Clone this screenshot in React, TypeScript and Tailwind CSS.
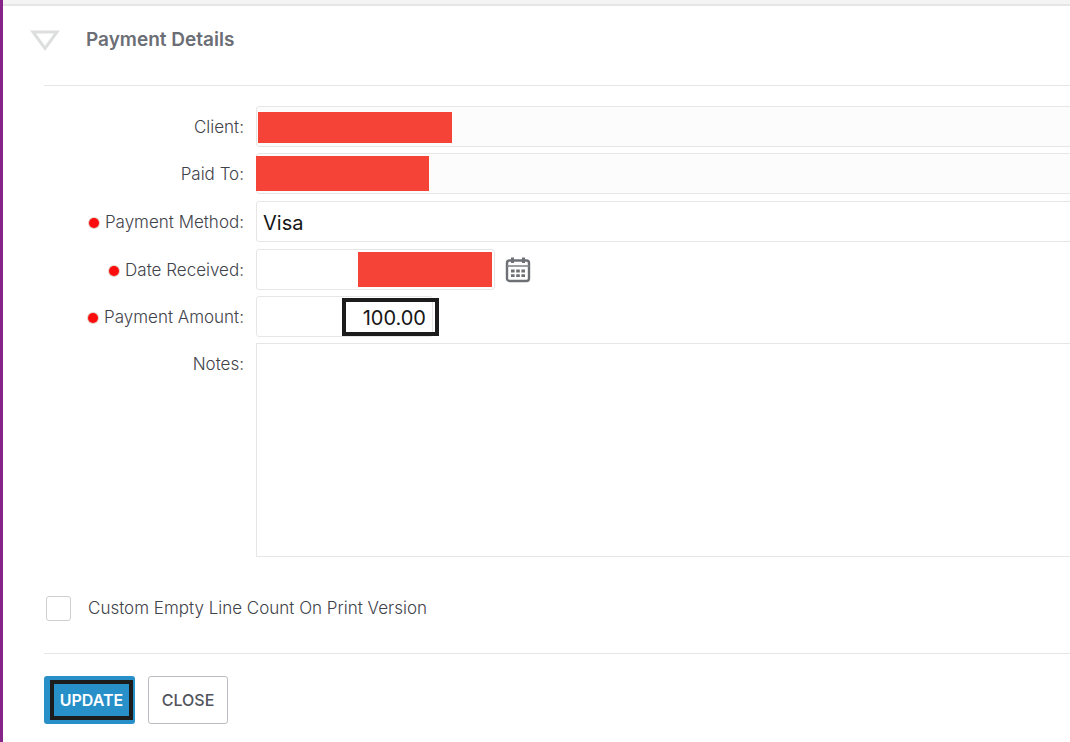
import type { ReactNode } from "react";

const fieldClass =
  "block h-[41px] rounded-[3px] border border-[#e6e6e6] px-1.5 pt-0.5 text-xl text-[#161616] outline-none";

type RowProps = {
  id: string;
  label: string;
  required?: boolean;
  children: ReactNode;
};

function Row({ id, label, required, children }: RowProps) {
  return (
    <div className="flex items-start">
      <label
        htmlFor={id}
        className="flex h-[41px] w-[200px] shrink-0 items-center justify-end gap-1.5 whitespace-nowrap pt-0.5 text-[17px] font-light text-[#3f434b]"
      >
        {required && (
          <span className="size-2.5 rounded-full bg-[#fb0d0d] ring-1 ring-[#e3cfc4]" />
        )}
        {label}
      </label>
      <div className="ml-3 flex min-w-0 grow items-center">{children}</div>
    </div>
  );
}

function CalendarIcon() {
  return (
    <svg width="26" height="26" viewBox="0 0 26 26" fill="none" aria-hidden="true">
      <rect x="2" y="3.5" width="22" height="20.5" rx="2.5" stroke="#6d7075" strokeWidth="2.4" />
      <path d="M2 9H24" stroke="#85888c" strokeWidth="1.6" />
      <path d="M7.5 0.5V6M18.5 0.5V6" stroke="#6d7075" strokeWidth="3" />
      <path
        d="M6 14H9.6M11.2 14H14.8M16.4 14H20M6 18.7H9.6M11.2 18.7H14.8M16.4 18.7H20"
        stroke="#6d7075"
        strokeWidth="2.8"
      />
    </svg>
  );
}

export default function App() {
  return (
    <main className="min-h-screen overflow-hidden border-l-[3px] border-[#86248a] bg-white font-['Inter',sans-serif]">
      <div className="h-1.5 border-b-2 border-[#e6e6e6] bg-[#f4f4f4]" />
      <form className="-mr-1 pl-[41px]" onSubmit={(e) => e.preventDefault()}>
        <header className="-ml-3.5 flex h-[79px] items-start pt-[19px]">
          <button type="button" aria-label="Collapse section" className="flex h-8 w-7 items-center">
            <svg width="30" height="22" viewBox="0 0 30 22" fill="none" className="shrink-0" aria-hidden="true">
              <path d="M3 2H27L15 18.5Z" stroke="#dddfdf" strokeWidth="3" />
            </svg>
          </button>
          <h1 className="ml-7 text-[19px] leading-[30px] font-semibold text-[#6b6e75]">
            Payment Details
          </h1>
        </header>

        <div className="flex flex-col gap-[7px] border-y border-[#e6e6e6] pt-5 pb-8">
          <div className="flex flex-col gap-1.5">
            <Row id="client" label="Client:">
              <div className="relative grow">
                <input id="client" readOnly className={`${fieldClass} w-full bg-[#fcfcfc]`} />
                <span className="absolute top-1.5 left-0.5 h-[31px] w-[194px] bg-[#f54437]" />
              </div>
            </Row>
            <Row id="paid-to" label="Paid To:">
              <div className="relative grow">
                <input id="paid-to" readOnly className={`${fieldClass} w-full bg-[#fcfcfc]`} />
                <span className="absolute top-[3px] left-0 h-[35px] w-[173px] bg-[#f54437]" />
              </div>
            </Row>
          </div>

          <Row id="method" label="Payment Method:" required>
            <select id="method" className={`${fieldClass} w-full appearance-none bg-white`}>
              <option>Visa</option>
            </select>
          </Row>

          <div className="flex flex-col gap-1.5">
            <Row id="date" label="Date Received:" required>
              <div className="relative w-[239px]">
                <input id="date" className={`${fieldClass} w-full bg-white text-right`} />
                <span className="absolute top-[3px] right-[3px] h-[35px] w-[134px] bg-[#f54437]" />
              </div>
              <button type="button" aria-label="Choose date" className="ml-2.5">
                <CalendarIcon />
              </button>
            </Row>
            <Row id="amount" label="Payment Amount:" required>
              <div className="relative w-[177px]">
                <input
                  id="amount"
                  defaultValue="100.00"
                  className={`${fieldClass} w-full bg-white text-right`}
                />
                <span className="pointer-events-none absolute top-0.5 -right-1.5 h-[38px] w-[97px] border-4 border-[#1c1c1c]" />
              </div>
            </Row>
            <Row id="notes" label="Notes:">
              <textarea
                id="notes"
                className="block h-[214px] w-full resize-none border border-[#e6e6e6] bg-white p-1.5 text-xl outline-none"
              />
            </Row>
          </div>

          <label className="mt-8 ml-0.5 flex items-center gap-[17px] self-start text-[17px] leading-[25px] font-light text-[#3f434b]">
            <input
              type="checkbox"
              className="size-[25px] appearance-none rounded-[3px] border border-[#cfcfcf] bg-white"
            />
            Custom Empty Line Count On Print Version
          </label>
        </div>

        <div className="flex gap-[13px] py-[22px]">
          <button
            type="submit"
            className="h-12 rounded-[3px] bg-[#2790c8] pr-0.5 pl-1.5 text-base font-semibold text-white"
          >
            <span className="flex h-10 w-[83px] items-center justify-center border-4 border-[#1c1c1c]">
              UPDATE
            </span>
          </button>
          <button
            type="button"
            className="h-12 w-20 rounded-[3px] border border-[#b9bdc1] bg-white text-base font-medium text-[#50545c]"
          >
            CLOSE
          </button>
        </div>
      </form>
    </main>
  );
}
